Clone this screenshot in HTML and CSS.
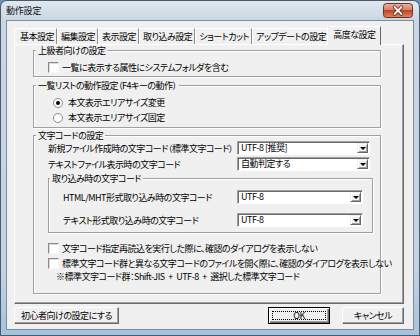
FILE: index.html
```html
<!DOCTYPE html>
<html>
<head>
  <meta charset="utf-8">
  <title>動作設定</title>
  <link rel="stylesheet" href="styles.css">
</head>
<body>
  <div class="window">
    <div class="titlebar">
      <span class="title">動作設定</span>
      <div class="close-btn">
        <svg width="30" height="15" viewBox="0 0 30 15">
          <defs>
            <linearGradient id="closeGrad" x1="0" y1="0" x2="0" y2="1">
              <stop offset="0" stop-color="#eab3a6"/>
              <stop offset="0.45" stop-color="#d77e68"/>
              <stop offset="0.5" stop-color="#c2432a"/>
              <stop offset="1" stop-color="#dc8a5c"/>
            </linearGradient>
          </defs>
          <rect x="0.5" y="0.5" width="29" height="14" rx="3" fill="url(#closeGrad)" stroke="#6e2f24"/>
          <path d="M11.5 4 L18.5 11 M18.5 4 L11.5 11" stroke="#5a2016" stroke-width="3.4" stroke-linecap="round"/>
          <path d="M11.5 4 L18.5 11 M18.5 4 L11.5 11" stroke="#fff" stroke-width="1.8" stroke-linecap="round"/>
        </svg>
      </div>
    </div>

    <div class="client">
      <div class="tabs">
        <div class="tab">基本設定</div>
        <div class="tab">編集設定</div>
        <div class="tab">表示設定</div>
        <div class="tab">取り込み設定</div>
        <div class="tab">ショートカット</div>
        <div class="tab">アップデートの設定</div>
        <div class="tab active">高度な設定</div>
      </div>

      <div class="panel">
        <div class="group group-expert">
          <div class="group-title">上級者向けの設定</div>
          <div class="check first"><span class="box"></span>一覧に表示する属性にシステムフォルダを含む</div>
        </div>

        <div class="group group-list">
          <div class="group-title">一覧リストの動作設定（F4キーの動作）</div>
          <div class="radio-row first"><span class="radio on"></span>本文表示エリアサイズ変更</div>
          <div class="radio-row"><span class="radio"></span>本文表示エリアサイズ固定</div>
        </div>

        <div class="group group-code">
          <div class="group-title">文字コードの設定</div>
          <div class="row">
            <span class="label">新規ファイル作成時の文字コード（標準文字コード）</span>
            <div class="select"><span class="select-text">UTF-8 [推奨]</span><span class="drop"></span></div>
          </div>
          <div class="row">
            <span class="label">テキストファイル表示時の文字コード</span>
            <div class="select"><span class="select-text">自動判定する</span><span class="drop"></span></div>
          </div>

          <div class="group sub">
            <div class="group-title">取り込み時の文字コード</div>
            <div class="row first">
              <span class="label">HTML/MHT形式取り込み時の文字コード</span>
              <div class="select"><span class="select-text">UTF-8</span><span class="drop"></span></div>
            </div>
            <div class="row second">
              <span class="label">テキスト形式取り込み時の文字コード</span>
              <div class="select"><span class="select-text">UTF-8</span><span class="drop"></span></div>
            </div>
          </div>

          <div class="check after-sub"><span class="box"></span>文字コード指定再読込を実行した際に、確認のダイアログを表示しない</div>
          <div class="check"><span class="box"></span>標準文字コード群と異なる文字コードのファイルを開く際に、確認のダイアログを表示しない</div>
          <div class="note">※標準文字コード群：Shift-JIS + UTF-8 + 選択した標準文字コード</div>
        </div>
      </div>

      <div class="buttons">
        <button class="btn beginner">初心者向けの設定にする</button>
        <button class="btn ok">OK</button>
        <button class="btn cancel">キャンセル</button>
      </div>
    </div>
  </div>
</body>
</html>
```

FILE: styles.css
```css
* {
  margin: 0;
  padding: 0;
  box-sizing: border-box;
  font-family: "Noto Sans CJK JP", "Noto Sans", sans-serif;
}

html, body {
  width: 420px;
  height: 336px;
  overflow: hidden;
}

body {
  font-size: 9px;
  font-feature-settings: "palt";
  letter-spacing: -0.5px;
  color: #000;
  background: #6d8fb0;
}

/* window frame */

.window {
  height: 336px;
  display: flex;
  flex-direction: column;
  padding: 0 5px 5px;
  border: 1px solid #4b5b6b;
  border-radius: 7px 7px 0 0;
  background: linear-gradient(#e0e8ef, #cad7e3 19px, #c3d3e2 80%, #a3c3df);
}

.titlebar {
  height: 19px;
  display: flex;
  align-items: flex-start;
  justify-content: space-between;
}

.title {
  line-height: 19px;
  letter-spacing: -0.2px;
  color: #111;
}

.close-btn {
  margin: 2px 1px 0 0;
  height: 15px;
}

.close-btn svg {
  display: block;
}

.client {
  flex: 1;
  display: flex;
  flex-direction: column;
  padding: 5px 9px 0 7px;
  border: 1px solid #7f8d9b;
  background: #f0f0f0;
}

/* tabs */

.tabs {
  display: flex;
  align-items: flex-end;
  height: 19px;
  margin-bottom: -1px;
}

.tab {
  height: 16px;
  margin-bottom: 1px;
  padding: 0 2px 0 3px;
  line-height: 15px;
  white-space: nowrap;
  border-top: 1px solid #fff;
  border-left: 1px solid #fff;
  border-right: 1px solid #8c8c8c;
}

.tab:first-child {
  padding-left: 5px;
}

.tab.active {
  position: relative;
  z-index: 1;
  height: 19px;
  margin: 0 0 0 -2px;
  padding: 0 5px;
  background: #f0f0f0;
  border-right-color: #696969;
}

.panel {
  height: 260px;
  padding: 5px 22px 0 18px;
  border: 1px solid;
  border-color: #fff #696969 #696969 #fff;
  box-shadow: inset -1px -1px #a0a0a0;
}

/* group boxes */

.group {
  border: 1px solid #a0a0a0;
  box-shadow: inset 1px 1px #fff, 1px 1px #fff;
  padding: 0 7px 2px 14px;
}

.group-title {
  display: table;
  margin: -6px 0 0 -12px;
  padding: 0 2px;
  line-height: 11px;
  background: #f0f0f0;
  white-space: nowrap;
}

.group-list {
  margin-top: 8px;
  padding-bottom: 3px;
}

.group-code {
  margin-top: 7px;
  padding-bottom: 10px;
}

.group.sub {
  margin-top: 7px;
  padding: 0 8px 5px 14px;
}

.group.sub .group-title {
  margin-left: -13px;
}

/* checkboxes and radios */

.check {
  display: flex;
  align-items: center;
  gap: 3px;
  height: 13px;
  white-space: nowrap;
}

.check + .check {
  margin-top: 2px;
}

.check.first {
  margin-top: 5px;
}

.check.after-sub {
  margin-top: 9px;
}

.box {
  width: 11px;
  height: 11px;
  flex-shrink: 0;
  background: #fff;
  border: 1px solid;
  border-color: #8a8a8a #f8f8f8 #f8f8f8 #8a8a8a;
  box-shadow: inset 1px 1px #dcdcdc;
}

.radio-row {
  display: flex;
  align-items: center;
  gap: 5px;
  height: 13px;
  margin-top: 2px;
  padding-left: 5px;
  white-space: nowrap;
}

.radio-row.first {
  margin-top: 5px;
}

.radio {
  width: 10px;
  height: 10px;
  display: flex;
  align-items: center;
  justify-content: center;
  border-radius: 50%;
  background: #fff;
  border: 1px solid #8a8a8a;
}

.radio.on::after {
  content: "";
  width: 4px;
  height: 4px;
  border-radius: 50%;
  background: #000;
}

.note {
  height: 12px;
  margin-top: 1px;
  line-height: 12px;
  padding-left: 8px;
  word-spacing: 2px;
  white-space: nowrap;
}

/* label + dropdown rows */

.row {
  display: flex;
  align-items: center;
  height: 14px;
}

.row + .row {
  margin-top: 2px;
}

.row.first {
  margin-top: 6px;
}

.row.second {
  margin-top: 9px;
}

.label {
  width: 189px;
  white-space: nowrap;
}

.select {
  width: 133px;
  height: 14px;
  display: flex;
  background: #fff;
  border: 1px solid;
  border-color: #a0a0a0 #fff #fff #a0a0a0;
  box-shadow: inset 1px 1px #696969;
}

.sub .label {
  width: 174px;
}

.sub .select {
  width: 126px;
}

.select-text {
  flex: 1;
  padding-left: 3px;
  line-height: 12px;
  white-space: nowrap;
}

.drop {
  width: 11px;
  margin: 1px 1px 1px 0;
  display: flex;
  align-items: center;
  justify-content: center;
  background: #f0f0f0;
  border: 1px solid;
  border-color: #f0f0f0 #696969 #696969 #f0f0f0;
  box-shadow: inset 1px 1px #fff, inset -1px -1px #a0a0a0;
}

.drop::after {
  content: "";
  border-left: 3px solid transparent;
  border-right: 3px solid transparent;
  border-top: 3px solid #000;
}

/* buttons */

.buttons {
  display: flex;
  margin-top: 3px;
}

.btn {
  height: 17px;
  font: inherit;
  letter-spacing: inherit;
  color: #000;
  background: #f0f0f0;
  border: 1px solid;
  border-color: #fff #696969 #696969 #fff;
  box-shadow: inset -1px -1px #a0a0a0;
  white-space: nowrap;
}

.beginner {
  width: 105px;
}

.ok {
  width: 62px;
  margin: 0 12px 0 auto;
  border-color: #000;
  box-shadow: inset 1px 1px #fff, inset -1px -1px #696969, inset -2px -2px #a0a0a0;
  outline: 1px dotted #000;
  outline-offset: -5px;
}

.cancel {
  width: 62px;
}
```
